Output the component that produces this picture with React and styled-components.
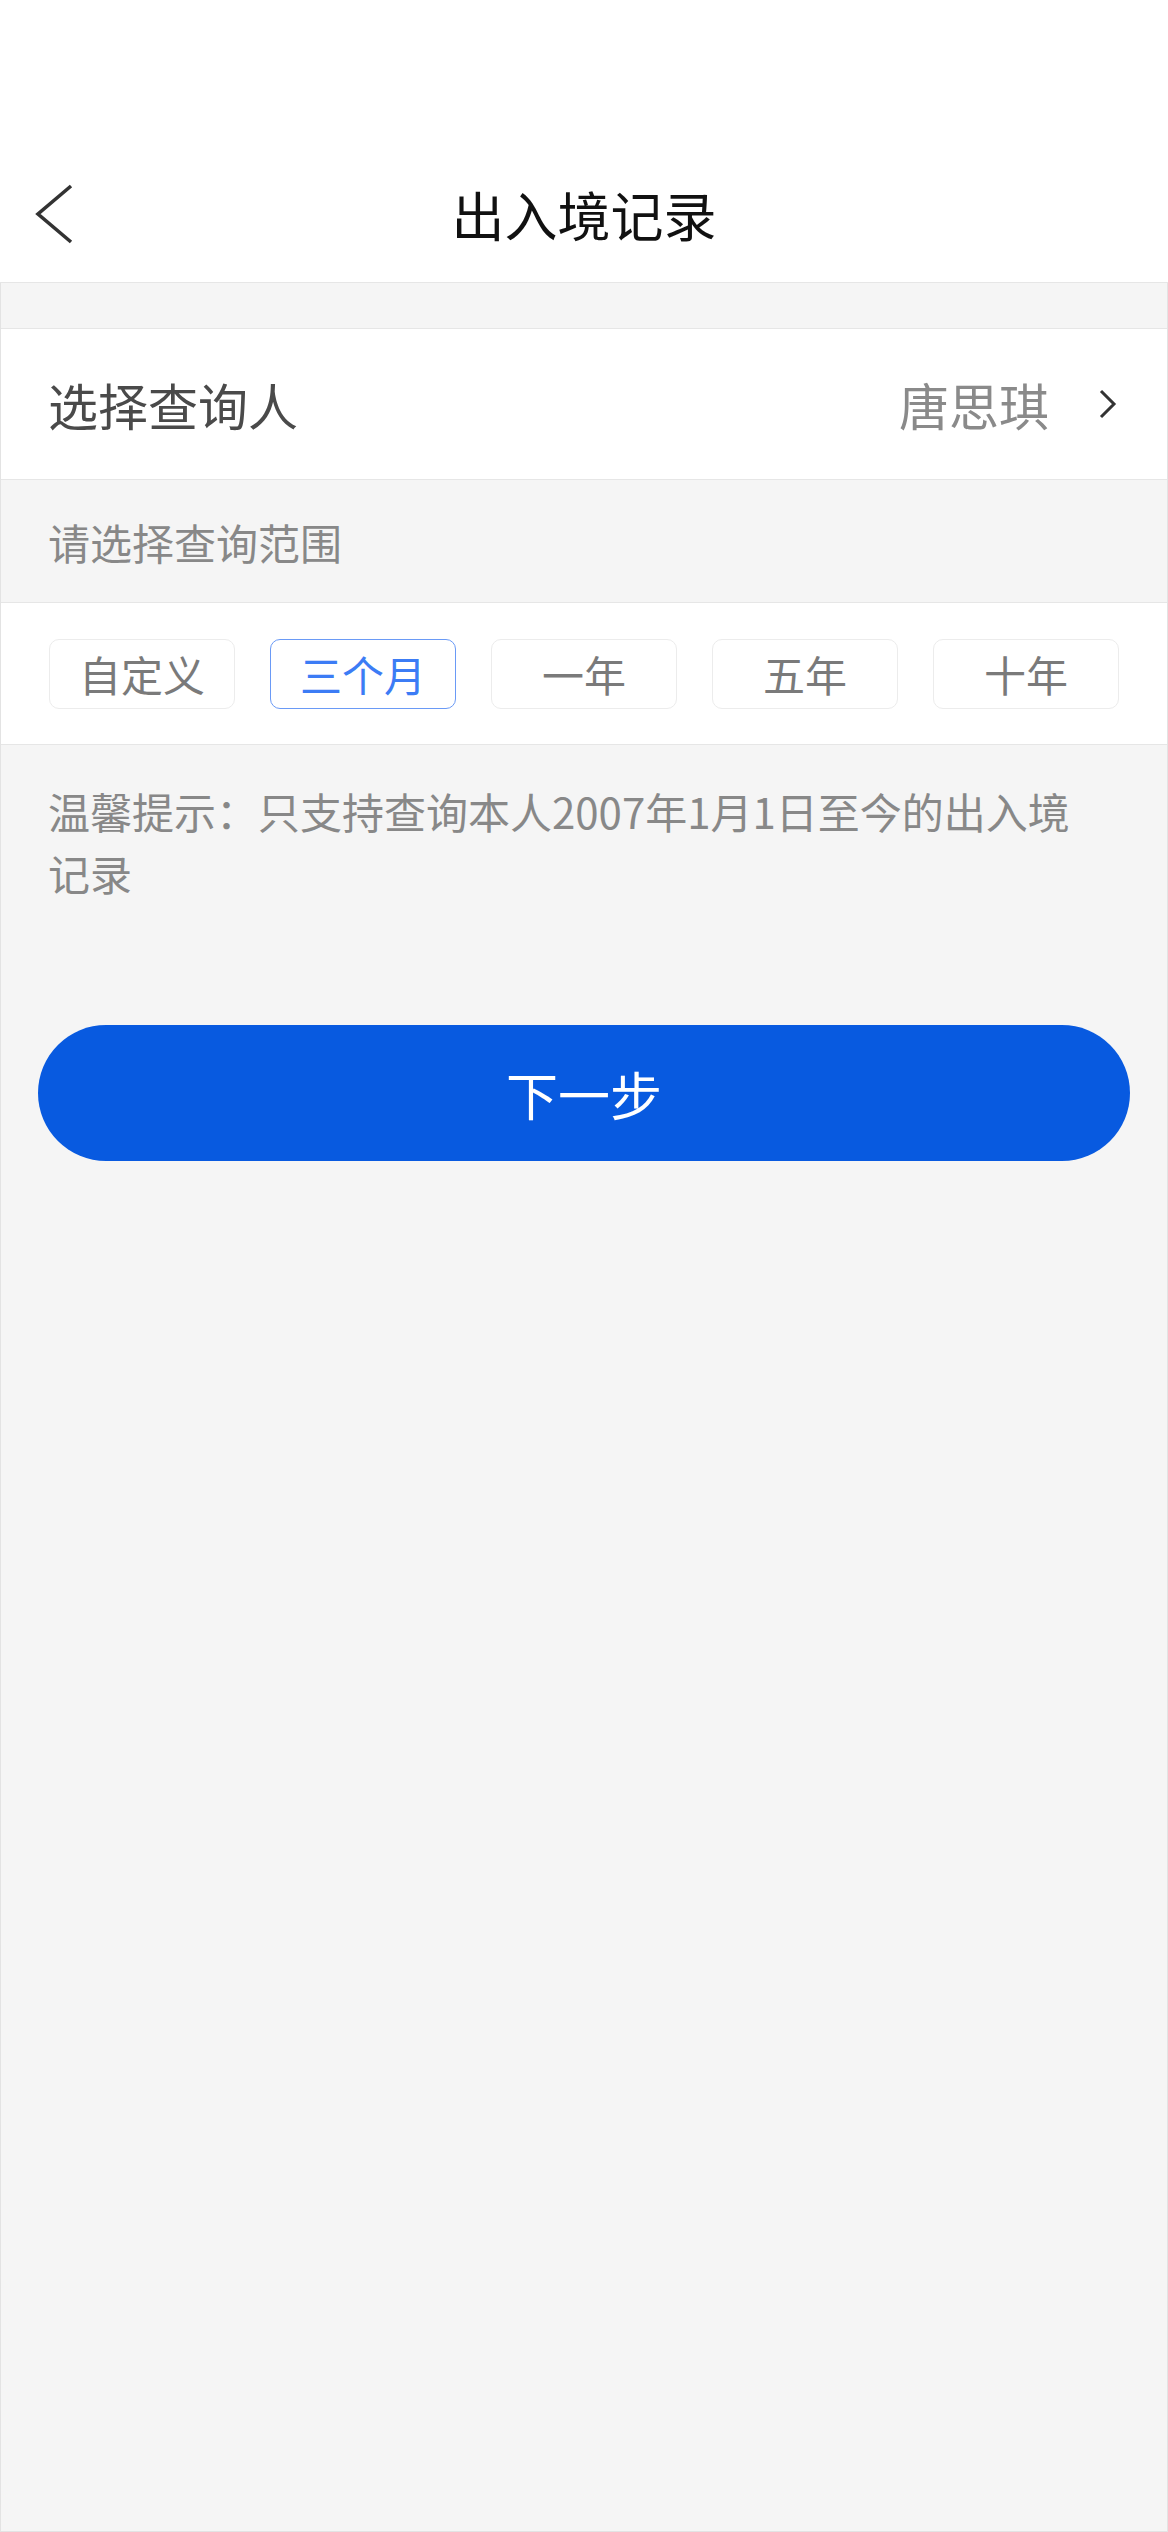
import React, { useState } from "react";
import styled, { createGlobalStyle } from "styled-components";

const GlobalStyle = createGlobalStyle`
  html, body {
    margin: 0;
    padding: 0;
    background: #f5f5f5;
  }
  body {
    font-family: "Noto Sans CJK SC", "Noto Sans", "Liberation Sans", sans-serif;
  }
  * {
    box-sizing: border-box;
  }
`;

const RANGES = ["自定义", "三个月", "一年", "五年", "十年"];

function BackIcon() {
  return (
    <svg width="40" height="62" viewBox="0 0 40 62" fill="none">
      <polyline
        points="36,3 3,31 36,59"
        stroke="#333"
        strokeWidth="3.6"
        strokeLinejoin="miter"
      />
    </svg>
  );
}

function ArrowIcon() {
  return (
    <svg width="18" height="30" viewBox="0 0 18 30" fill="none">
      <polyline
        points="2,2 15,15 2,28"
        stroke="#333"
        strokeWidth="3"
        strokeLinejoin="miter"
      />
    </svg>
  );
}

function App() {
  const [range, setRange] = useState("三个月");
  return (
    <Page>
      <GlobalStyle />
      <Header>
        <NavBar>
          <BackButton>
            <BackIcon />
          </BackButton>
          <Title>出入境记录</Title>
        </NavBar>
      </Header>
      <Body>
        <PersonRow>
          <RowLabel>选择查询人</RowLabel>
          <RowValue>
            唐思琪
            <ArrowIcon />
          </RowValue>
        </PersonRow>
        <SectionLabel>请选择查询范围</SectionLabel>
        <RangeRow>
          {RANGES.map((r) => (
            <Chip key={r} $active={r === range} onClick={() => setRange(r)}>
              {r}
            </Chip>
          ))}
        </RangeRow>
        <Tip>温馨提示：只支持查询本人2007年1月1日至今的出入境记录</Tip>
        <NextButton>下一步</NextButton>
      </Body>
    </Page>
  );
}

const Page = styled.div`
  min-height: 100vh;
  display: flex;
  flex-direction: column;
`;

const Header = styled.header`
  background: #fff;
  padding-top: 146px;
  border-bottom: 1px solid #e6e6e6;
`;

const NavBar = styled.div`
  position: relative;
  height: 136px;
  display: flex;
  align-items: center;
  justify-content: center;
`;

const BackButton = styled.div`
  position: absolute;
  left: 35px;
  top: 50%;
  transform: translateY(-50%);
  display: flex;
`;

const Title = styled.h1`
  margin: 0;
  font-size: 53px;
  font-weight: 400;
  color: #111;
`;

const Body = styled.main`
  flex: 1;
  background: #f5f5f5;
  border: 1px solid #e3e3e3;
  border-top: none;
  padding-top: 45px;
  display: flex;
  flex-direction: column;
`;

const PersonRow = styled.div`
  height: 152px;
  background: #fff;
  border-top: 1px solid #e6e6e6;
  border-bottom: 1px solid #e6e6e6;
  display: flex;
  align-items: center;
  justify-content: space-between;
  padding: 0 50px 0 47px;
`;

const RowLabel = styled.span`
  font-size: 50px;
  color: #4a4a4a;
`;

const RowValue = styled.span`
  display: flex;
  align-items: center;
  gap: 50px;
  font-size: 50px;
  color: #8a8a8a;
`;

const SectionLabel = styled.div`
  height: 122px;
  display: flex;
  align-items: center;
  padding-left: 47px;
  font-size: 42px;
  color: #888;
`;

const RangeRow = styled.div`
  height: 143px;
  background: #fff;
  border-top: 1px solid #e6e6e6;
  border-bottom: 1px solid #e6e6e6;
  display: grid;
  grid-template-columns: repeat(5, 1fr);
  column-gap: 35px;
  align-items: center;
  padding: 0 48px;
`;

const Chip = styled.button`
  height: 70px;
  border-radius: 10px;
  border: 1.5px solid ${(p) => (p.$active ? "#6a9af6" : "#ececec")};
  background: #fff;
  color: ${(p) => (p.$active ? "#3c7cf5" : "#7a7a7a")};
  font-family: inherit;
  font-size: 42px;
  padding: 0;
  cursor: pointer;
`;

const Tip = styled.p`
  margin: 0;
  padding: 35px 80px 0 47px;
  font-size: 42px;
  line-height: 62px;
  color: #888;
`;

const NextButton = styled.button`
  margin: 121px 37px 0;
  height: 136px;
  border: none;
  border-radius: 68px;
  background: #085ae0;
  color: #fff;
  font-family: inherit;
  font-size: 52px;
  cursor: pointer;
`;

export default App;
